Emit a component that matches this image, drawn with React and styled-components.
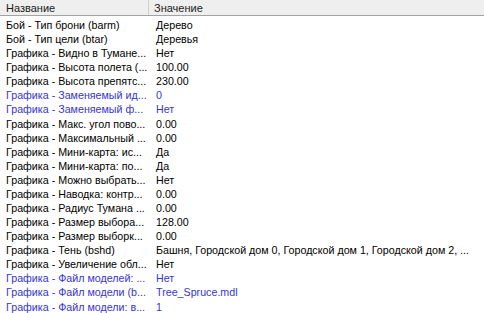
import React from "react";
import styled, { createGlobalStyle } from "styled-components";

const Global = createGlobalStyle`
  html, body { margin: 0; padding: 0; background: #fff; }
  body { font-family: "Liberation Sans", Arial, sans-serif; font-size: 11px; }
`;

const List = styled.div`
  width: 484px;
  height: 313px;
  overflow: hidden;
  background: #fff;
`;

const Header = styled.div`
  display: grid;
  grid-template-columns: 149px 1fr;
  height: 15px;
  background: #efefef;
  border-bottom: 1px solid #a3a3a3;
  box-sizing: content-box;
`;

const HeadCell = styled.div`
  padding-left: ${(p) => p.$pad}px;
  line-height: 16px;
  color: #1a1a1a;
  border-right: ${(p) => (p.$divider ? "1px solid #d0d0d0" : "none")};
  white-space: nowrap;
  overflow: hidden;
`;

const Body = styled.div`
  display: flex;
  flex-direction: column;
  padding-top: 2px;
`;

const Row = styled.div`
  display: grid;
  grid-template-columns: 150px 1fr;
  height: 14.08px;
  flex: none;
  line-height: 14px;
  font-size: 10.7px;
  color: ${(p) => (p.$mod ? "#3535cf" : "#000")};
`;

const Cell = styled.div`
  padding-left: ${(p) => p.$pad}px;
  white-space: nowrap;
  overflow: hidden;
`;

const rows = [
  ["Бой - Тип брони (barm)", "Дерево"],
  ["Бой - Тип цели (btar)", "Деревья"],
  ["Графика - Видно в Тумане...", "Нет"],
  ["Графика - Высота полета (...", "100.00"],
  ["Графика - Высота препятс...", "230.00"],
  ["Графика - Заменяемый ид...", "0", true],
  ["Графика - Заменяемый ф...", "Нет", true],
  ["Графика - Макс. угол пово...", "0.00"],
  ["Графика - Максимальный ...", "0.00"],
  ["Графика - Мини-карта: ис...", "Да"],
  ["Графика - Мини-карта: по...", "Да"],
  ["Графика - Можно выбрать...", "Нет"],
  ["Графика - Наводка: контр...", "0.00"],
  ["Графика - Радиус Тумана ...", "0.00"],
  ["Графика - Размер выбора...", "128.00"],
  ["Графика - Размер выборк...", "0.00"],
  ["Графика - Тень (bshd)", "Башня, Городской дом 0, Городской дом 1, Городской дом 2, ..."],
  ["Графика - Увеличение обл...", "Нет"],
  ["Графика - Файл моделей: ...", "Нет", true],
  ["Графика - Файл модели (b...", "Tree_Spruce.mdl", true],
  ["Графика - Файл модели: в...", "1", true],
];

export default function App() {
  return (
    <>
      <Global />
      <List>
        <Header>
          <HeadCell $pad={6} $divider>Название</HeadCell>
          <HeadCell $pad={5}>Значение</HeadCell>
        </Header>
        <Body>
          {rows.map(([name, value, mod], i) => (
            <Row key={i} $mod={mod}>
              <Cell $pad={6}>{name}</Cell>
              <Cell $pad={6}>{value}</Cell>
            </Row>
          ))}
        </Body>
      </List>
    </>
  );
}
